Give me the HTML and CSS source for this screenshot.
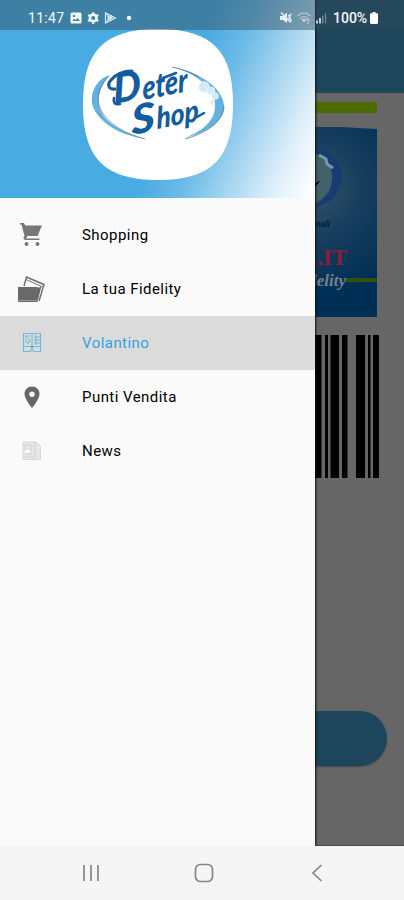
FILE: index.html
```html
<!DOCTYPE html>
<html lang="it">
<head>
<meta charset="utf-8">
<title>Deter Shop</title>
<link rel="stylesheet" href="styles.css">
</head>
<body>
<div class="phone">
  <main class="page">
    <div class="appbar"></div>
    <div class="strip"></div>
    <svg class="card" viewBox="0 0 377 190">
      <defs>
        <radialGradient id="glow" gradientUnits="userSpaceOnUse" cx="312" cy="62" r="105">
          <stop offset="0" stop-color="#36566b"/><stop offset=".45" stop-color="#183f5e"/><stop offset="1" stop-color="#002f56"/>
        </radialGradient>
      </defs>
      <path d="M0 0H340L377 2V190H0Z" fill="url(#glow)"/>
      <path d="M300 21C332 18 347 40 340 58C337 71 326 79 308 82C326 73 333 65 332 50C332 34 322 25 300 21Z" fill="#183b72"/>
      <path d="M304 27C322 24 333 36 332 51C331 66 323 73 308 78Z" fill="#45606d"/>
      <path d="M319 28l7 4 1 5 6 4" stroke="#7894a2" stroke-width="3" fill="none"/>
      <path d="M314 57l7-4-6 7Z" fill="#02080c"/>
      <text x="316" y="100" class="card-small">nali</text>
      <path d="M345 153H377" stroke="#344f0a" stroke-width="4"/>
      <text x="347" y="138" class="card-domain" textLength="46" lengthAdjust="spacingAndGlyphs">R.IT</text>
      <text x="346" y="159" class="card-script">Fidelity</text>
    </svg>
    <svg class="barcode" viewBox="0 0 379 143">
      <path d="M300 0h21.500v143h-21.500zM325 0h3v143h-3zM330.500 0h8.500v143h-8.500zM342 0h5.500v143h-5.500zM356 0h9v143h-9zM368 0h2.500v143h-2.500zM373 0h6v143h-6z"/>
    </svg>
    <div class="button"></div>
  </main>

  <aside class="drawer">
    <header class="drawer-head">
      <svg class="logo" viewBox="0 0 150 151">
        <path d="M75 0C130 0 150 23 150 75C150 128 130 151 75 151C20 151 0 128 0 75C0 23 20 0 75 0Z" fill="#fff"/>
        <path d="M27 46C12 50 5 68 11 80C19 96 40 107 63 110C40 104 22 94 17 80C13 68 18 56 27 46Z" fill="#65b1df"/>
        <path d="M26 47C14 59 13 70 18 81C25 95 43 105 62 110" stroke="#57618b" stroke-width=".6" fill="none"/>
        <path d="M89 38C119 44 139 59 141 76C142 91 126 103 102 109C124 100 133 89 132 74C130 58 114 45 89 38Z" fill="#65b1df"/>
        <path d="M89 38C99 40 108 43 116 48M141 77C141 91 125 104 102 110" stroke="#57618b" stroke-width=".7" fill="none"/>
        <g fill="#d4eafa" stroke="#fff" stroke-width=".5"><circle cx="121" cy="58" r="5.500"/><circle cx="128" cy="62" r="4"/><circle cx="132" cy="67" r="3.500"/><circle cx="129" cy="73" r="2"/></g>
        <g class="brand">
          <text transform="translate(31 75) rotate(-11) skewX(-8)" font-size="41" textLength="28" lengthAdjust="spacingAndGlyphs">D</text>
          <text transform="translate(60 71) rotate(-11) skewX(-8)" font-size="33" textLength="46" lengthAdjust="spacingAndGlyphs">eter</text>
          <text transform="translate(49 106) rotate(-11) skewX(-8)" font-size="40" textLength="24" lengthAdjust="spacingAndGlyphs">S</text>
          <text transform="translate(74 100) rotate(-11) skewX(-8)" font-size="30" textLength="43" lengthAdjust="spacingAndGlyphs">hop</text>
        </g>
        <g fill="none" stroke="#125c9f" stroke-linecap="round">
          <path d="M32 60C25 61 24 55 28 51C33 45 40 42 49 42" stroke-width="3"/>
          <path d="M31 69C30 74 32 76 37 75M80 49L93 44M114 88l7-4" stroke-width="2.500"/>
        </g>
      </svg>
    </header>
    <nav class="menu">
      <a class="item">
        <svg class="icon" viewBox="0 0 28 28"><path d="M2 2h4l1.200 2.500H24L19.500 15H9.500L8 17.500H21.500V19H7.500Q4 18.500 6.500 15L3.500 3.500H2Z" fill="#777"/><circle cx="8.500" cy="23" r="2" fill="#777"/><circle cx="19.500" cy="23" r="2" fill="#777"/></svg>
        <span>Shopping</span>
      </a>
      <a class="item">
        <svg class="icon" viewBox="0 0 28 28"><path d="M6 11L8.500 2L26 9.500L21 26" fill="none" stroke="#6c6c6c" stroke-width="1.400"/><path d="M8 4.500L25 12" stroke="#888" stroke-width="1.300"/><path d="M0 12H20V13L23.500 11L19.500 27H0Z" fill="#696969"/><path d="M0 25.500H20" stroke="#999"/></svg>
        <span>La tua Fidelity</span>
      </a>
      <a class="item selected">
        <svg class="icon" viewBox="0 0 28 28"><g fill="none" stroke="#73b8dd" stroke-width="1.100"><path d="M5.500 4.500H13L14 6L15 4.500H22.500V22.500H16L14 20.500L12 22.500H5.500ZM14 6V18M5 17.500H23M7 7H12M8 7V14M10 9l2 3-3 3M16 8H22M16 11H22M16 14H22M18 6V16"/></g><path d="M12 17h4l-2 3Z" fill="#48a7dc"/></svg>
        <span>Volantino</span>
      </a>
      <a class="item">
        <svg class="icon" viewBox="0 0 28 28"><path d="M14 3.500C9.500 3.500 6.500 7 6.500 11C6.500 16 14 25 14 25S21.500 16 21.500 11C21.500 7 18.500 3.500 14 3.500Z" fill="#666"/><circle cx="14" cy="11.300" r="2.700" fill="#fafafa"/></svg>
        <span>Punti Vendita</span>
      </a>
      <a class="item">
        <svg class="icon" viewBox="0 0 28 28"><path d="M5 5H18L22.500 9V22.500H5Z" fill="#e7e7e7" stroke="#d8d8d8"/><path d="M7 8H13V14H7ZM17 5V21M7 17H15M7 20H15" stroke="#d0d0d0" fill="none"/><path d="M7 13h5v3H7z" fill="#fff"/></svg>
        <span>News</span>
      </a>
    </nav>
  </aside>

  <div class="status">
    <span class="clock">11:47</span>
    <svg class="notices" viewBox="0 0 62 14">
      <path fill="#f2f8fb" fill-rule="evenodd" d="M2 1.500H10Q11.500 1.500 11.500 3V11Q11.500 12.500 10 12.500H2Q.5 12.500 .5 11V3Q.5 1.500 2 1.500ZM2.500 10H10L7.500 7L5.800 9L4.300 7.500ZM3 4V6H5V4Z"/>
      <circle cx="23.200" cy="7" r="3.300" fill="none" stroke="#f2f8fb" stroke-width="2.500"/>
      <path d="M23.200 1.200v2M23.200 10.800v2M18.200 4.100l1.800 1M26.400 8.900l1.800 1M18.200 9.900l1.800-1M26.400 5.100l1.800-1" stroke="#f2f8fb" stroke-width="2.300"/>
      <path d="M35.500 2V12L45.500 7ZM36 2L42 10M36 12L42 4M38 5v4l4-2Z" fill="none" stroke="#d6e8f2" stroke-width="1.200"/>
      <circle cx="59" cy="7" r="2.200" fill="#f7fbfd"/>
    </svg>
    <svg class="signals" viewBox="0 0 48 14">
      <path d="M0 5H3L7 1.500V12L3 9H0Z" fill="#e9f0f4"/><path d="M1 1.500L11 11.500M8.500 4l3 6M11 2.500L8 10" stroke="#e0eaf0" stroke-width="1.500" fill="none"/>
      <g fill="none" stroke="#a9c0cd" stroke-width="1.500"><path d="M17.500 5Q24-1 30.500 5M20 7.500Q24 4 28 7.500"/><path d="M26 9h4M28 7v6"/></g><path d="M21.500 8h5L24 11.500Z" fill="#c6d5dd"/>
      <path d="M36 12.500h2v-3h-2ZM39 12.500h2V7h-2Z" fill="#c3cbd0"/><path d="M42 12.500h1.500V4.500H42ZM45 12.500h1.200V2H45Z" fill="#718692"/>
    </svg>
    <span class="percent">100%</span>
    <svg class="battery" viewBox="0 0 8 12"><path d="M2.500 0h3v1.200H7Q8 1.200 8 2.400V10.500Q8 12 6.500 12h-5Q0 12 0 10.500V2.400Q0 1.200 1 1.200h1.500Z" fill="#fff"/></svg>
  </div>

  <footer class="navbar">
    <svg viewBox="0 0 20 20"><path d="M3 2V18M10 2V18M17 2V18"/></svg>
    <svg viewBox="0 0 20 20"><rect x="1.500" y="1.500" width="17" height="17" rx="5"/></svg>
    <svg viewBox="0 0 20 20"><path d="M14.500 2L6 10L14.500 18"/></svg>
  </footer>
</div>
</body>
</html>
```
FILE: styles.css
```css
* { box-sizing: border-box; }
body { margin: 0; font-family: Roboto, "Liberation Sans", sans-serif; }
.phone {
  position: relative;
  width: 404px;
  height: 900px;
  overflow: hidden;
  display: grid;
  grid-template-rows: 846px 54px;
}
.page {
  display: flex;
  flex-direction: column;
  align-items: flex-start;
  background: #666;
  border-bottom: 1px solid #484848;
}
.appbar { width: 100%; height: 93px; background: #1d465c; }
.strip { width: 377px; height: 11px; margin-top: 9px; background: #4b6b00; }
.card { width: 377px; height: 190px; margin-top: 14px; }
.card-small { font: italic 700 9px Roboto, sans-serif; fill: #061c3e; }
.card-domain { font: 700 24px "Liberation Serif", serif; fill: #8a1d32; text-anchor: end; }
.card-script { font: italic 700 17px "Liberation Serif", serif; fill: #75818c; text-anchor: end; }
.barcode { width: 379px; height: 143px; margin-top: 18px; }
.button {
  width: 369px;
  height: 55px;
  margin: 233px 0 0 18px;
  border-radius: 28px;
  background: #1d465c;
  box-shadow: 0 1px 2px #4a4a4a;
}
.drawer {
  position: absolute;
  top: 0;
  left: 0;
  width: 315px;
  height: 846px;
  background: #fafafa;
  box-shadow: 1px 0 2px #111;
  clip-path: inset(0 -4px 0 0);
}
.drawer-head {
  display: flex;
  justify-content: center;
  height: 198px;
  padding-top: 28.500px;
  background: linear-gradient(113deg, #48abe1 0%, #48abe1 55%, #6dbbe7 66%, #a5d5f0 77%, #dff0fa 89%, #fafdff 98%);
}
.logo { width: 150px; height: 151px; }
.brand {
  font-family: Lato, "Liberation Sans", sans-serif;
  font-style: italic;
  font-weight: 900;
  fill: #125c9f;
}
.menu { padding-top: 9.500px; }
.item {
  display: flex;
  align-items: center;
  height: 54px;
  padding-left: 18px;
  gap: 36px;
  color: #000;
  font-size: 15px;
  line-height: 20px;
  letter-spacing: .45px;
}
.item.selected { background: #dbdbdb; color: #36a2dd; }
.icon { width: 28px; height: 28px; flex: none; }
.status {
  position: absolute;
  top: 0;
  left: 0;
  width: 404px;
  height: 29.500px;
  padding: 7px 26px 0 28px;
  display: flex;
  align-items: center;
  background: rgba(50, 75, 90, .45);
  color: #f4f8fa;
  font-size: 14px;
  line-height: 20px;
}
.clock { width: 42px; letter-spacing: .3px; }
.notices { width: 62px; height: 14px; }
.signals { width: 48px; height: 14px; margin-left: auto; }
.percent { width: 36px; margin-left: 5px; font-weight: 500; }
.battery { width: 8px; height: 12px; margin-left: 1px; }
.navbar {
  display: flex;
  justify-content: space-between;
  align-items: center;
  padding: 0 77px 0 81px;
  background: #f5f5f5;
}
.navbar svg { width: 20px; height: 20px; fill: none; stroke: #868686; stroke-width: 1.700; }
```
